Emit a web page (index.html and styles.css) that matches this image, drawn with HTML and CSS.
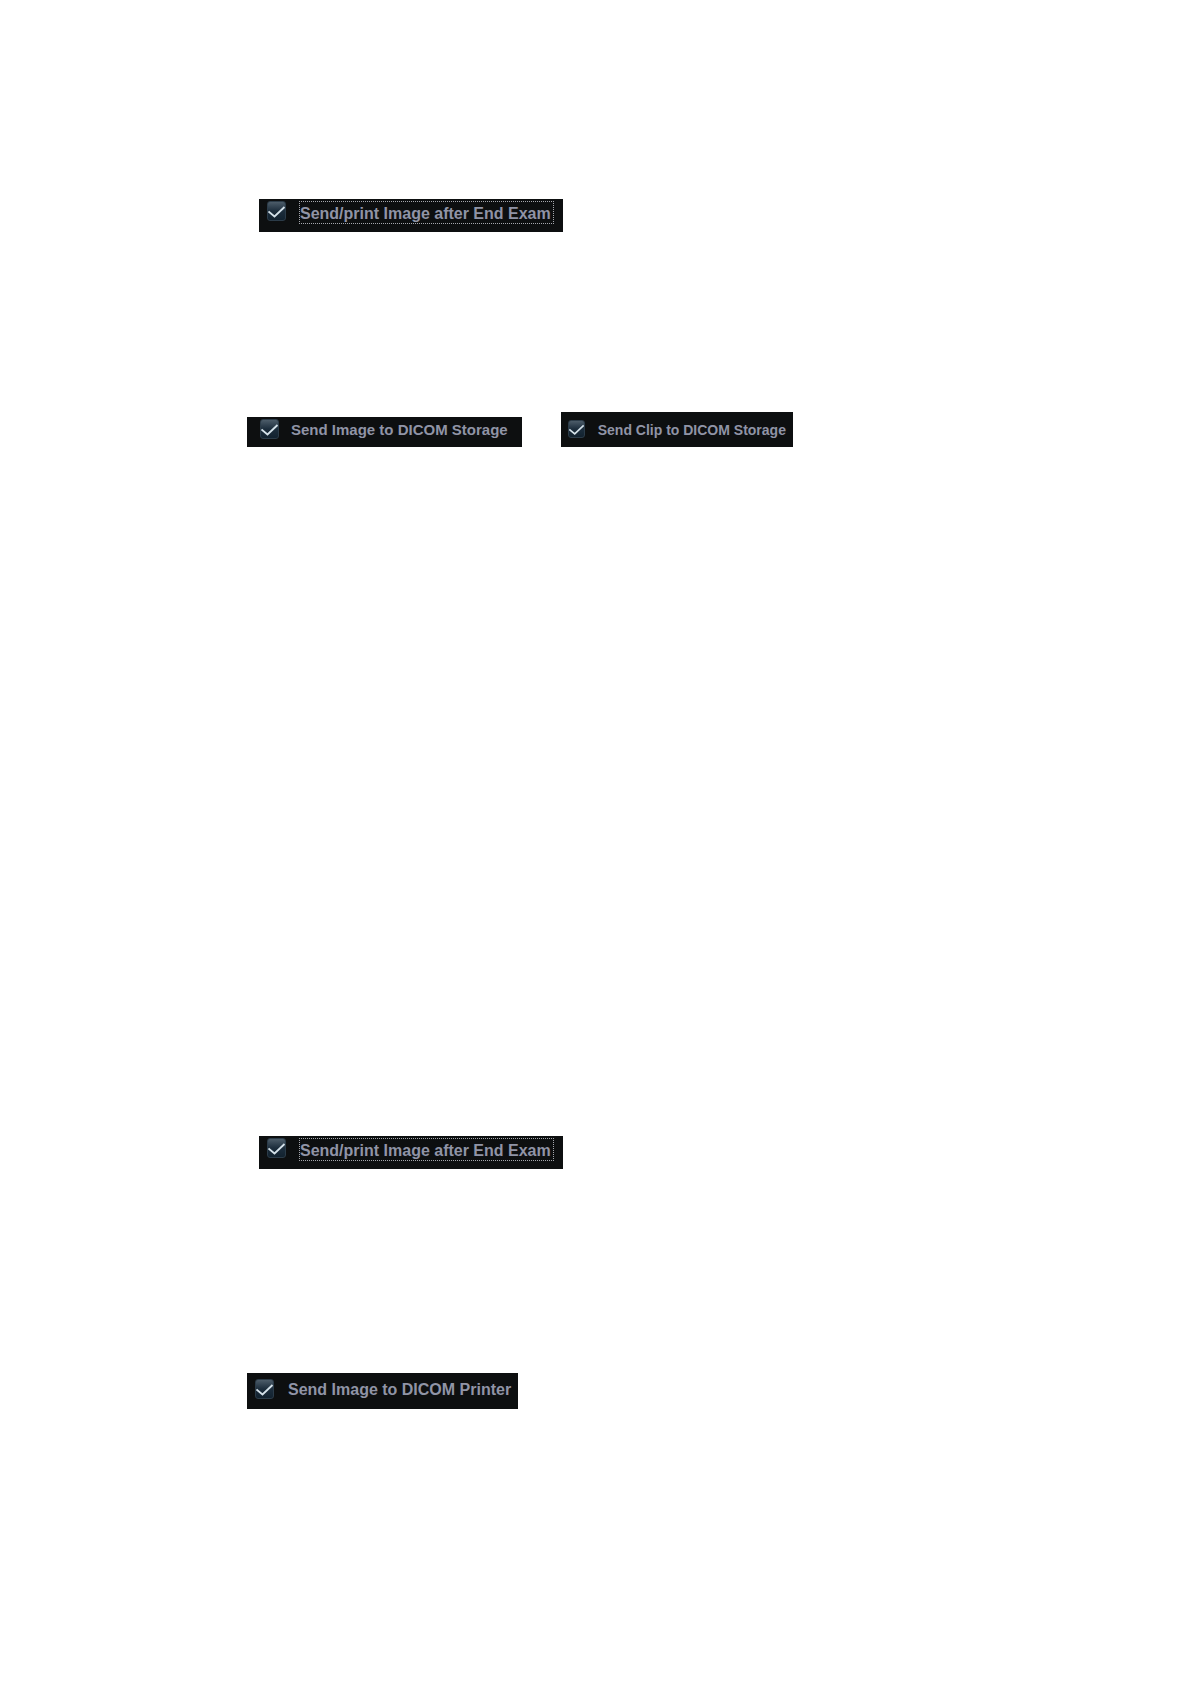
FILE: index.html
```
<!DOCTYPE html>
<html lang="en">
<head>
    <meta charset="UTF-8">
    <meta name="viewport" content="width=device-width, initial-scale=1.0">
    <title>DICOM options</title>
    <link rel="stylesheet" href="styles.css">
</head>
<body>
    <main class="page">
        <section class="storage">
            <label class="option focused">
                <input type="checkbox" class="check" checked>
                <span class="option-text">Send/print Image after End Exam</span>
            </label>
            <div class="option-row">
                <label class="option image">
                    <input type="checkbox" class="check" checked>
                    <span class="option-text">Send Image to DICOM Storage</span>
                </label>
                <label class="option clip">
                    <input type="checkbox" class="check" checked>
                    <span class="option-text">Send Clip to DICOM Storage</span>
                </label>
            </div>
        </section>

        <section class="printer">
            <label class="option focused">
                <input type="checkbox" class="check" checked>
                <span class="option-text">Send/print Image after End Exam</span>
            </label>
            <div class="option-row">
                <label class="option print">
                    <input type="checkbox" class="check" checked>
                    <span class="option-text">Send Image to DICOM Printer</span>
                </label>
            </div>
        </section>
    </main>
</body>
</html>
```
FILE: styles.css
```
* {
    box-sizing: border-box;
}
body {
    margin: 0;
    background-color: #fff;
    font-family: "Liberation Sans", Arial, sans-serif;
}
.page {
    padding: 199px 40px 275px 247px;
}
.storage,
.printer {
    display: flex;
    flex-direction: column;
    align-items: flex-start;
}
.storage {
    gap: 180px;
    margin-bottom: 689px;
}
.printer {
    gap: 204px;
}
.option-row {
    display: flex;
    flex-wrap: wrap;
    align-items: flex-end;
    gap: 39px;
}
.option {
    display: flex;
    align-items: center;
    gap: 14px;
    background-color: #0d0f10;
    color: #9094a6;
    font-size: 16px;
    font-weight: bold;
    line-height: 18px;
    white-space: nowrap;
}
.option-text {
    padding-top: 2px;
}
.check {
    appearance: none;
    flex: none;
    width: 19px;
    height: 20px;
    margin: 0;
    border: 1px solid #2b3b48;
    border-radius: 3px;
    background: linear-gradient(#4c5c69, #1c2d3c 50%, #12222f);
}
.check:checked {
    background:
        url("data:image/svg+xml,%3Csvg xmlns='http://www.w3.org/2000/svg' viewBox='0 0 19 20'%3E%3Cpath d='M1.5 10.5l6 5L17.5 6' fill='none' stroke='%23d3e0e8' stroke-width='1.8'/%3E%3C/svg%3E") center / 100% 100% no-repeat border-box,
        linear-gradient(#4c5c69, #1c2d3c 50%, #12222f);
}

/* option with the keyboard focus frame */
.focused {
    align-items: flex-start;
    gap: 13px;
    margin-left: 12px;
    padding: 2px 9px 8px 8px;
}
.focused .option-text {
    padding: 2px 2px 0 0;
    border: 1px dotted #a5a7ad;
    line-height: 19px;
}

.image {
    gap: 12px;
    padding: 2px 14px 8px 13px;
    font-size: 15px;
}
.clip {
    gap: 13px;
    padding: 7px 7px 8px;
    font-size: 14px;
}
.clip .check {
    width: 17px;
    height: 18px;
}
.print {
    padding: 6px 7px 10px 8px;
}
```
